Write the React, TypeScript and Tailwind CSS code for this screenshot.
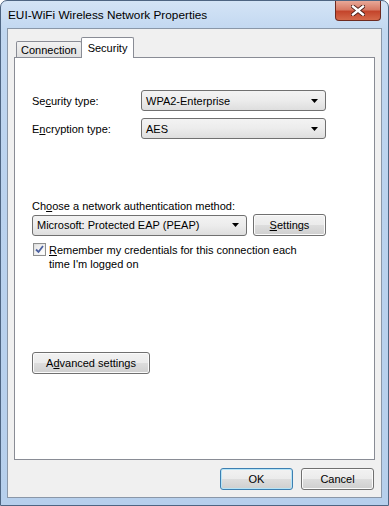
import React from 'react';

const font = { fontFamily: '"Liberation Sans", Arial, sans-serif' };

const Arrow = () => (
  <svg width="7" height="4" viewBox="0 0 7 4" className="shrink-0">
    <path d="M0 0h7L3.5 4z" fill="#000" />
  </svg>
);

const Combo = ({ value, className }: { value: string; className: string }) => (
  <div
    className={`h-[21px] flex items-center justify-between pl-[4px] pr-[7px] rounded-[3px] border border-[#707070] bg-gradient-to-b from-[#f3f3f3] via-[#ececec] to-[#dedede] text-black ${className}`}
  >
    <span>{value}</span>
    <Arrow />
  </div>
);

const Btn = ({
  children,
  className,
  primary,
}: {
  children: React.ReactNode;
  className: string;
  primary?: boolean;
}) => (
  <div
    className={`h-[22px] flex items-center justify-center rounded-[3px] border ${
      primary ? 'border-[#3c7fb1] shadow-[inset_0_0_0_1px_#b6e4f7]' : 'border-[#707070] shadow-[inset_0_0_0_1px_#fbfbfb]'
    } bg-[linear-gradient(#f2f2f2_0%,#ebebeb_50%,#dddddd_51%,#cfcfcf_100%)] text-black ${className}`}
  >
    {children}
  </div>
);

const App = () => {
  return (
    <div
      style={font}
      className="w-[389px] h-[506px] text-[11px] leading-[14px] text-black flex flex-col rounded-t-[7px] border border-[#4e6582] bg-[linear-gradient(180deg,#d4e4f6_0%,#c1d7f0_6%,#bad2ee_40%,#b6cfec_100%)] px-[6px] pb-[7px] overflow-hidden"
    >
      {/* title bar */}
      <div className="h-[27px] flex justify-between shrink-0">
        <div className="pt-[7px] pl-[1px] text-[11.8px] text-black">EUI-WiFi Wireless Network Properties</div>
        <div className="w-[46px] h-[20px] mr-[1px] rounded-b-[4px] border border-t-0 border-[#6e2a20] bg-[linear-gradient(180deg,#e8a898_0%,#d77a65_45%,#c4452c_55%,#d5694a_100%)] flex items-center justify-center">
          <svg width="14" height="11" viewBox="0 0 14 11">
            <path
              d="M2 1.5 L12 9.5 M12 1.5 L2 9.5"
              stroke="#4a1d16"
              strokeWidth="4.2"
              strokeLinecap="square"
            />
            <path
              d="M2 1.5 L12 9.5 M12 1.5 L2 9.5"
              stroke="#fff"
              strokeWidth="2.4"
              strokeLinecap="square"
            />
          </svg>
        </div>
      </div>

      {/* client area */}
      <div className="flex-1 flex flex-col bg-[#f0f0f0] border border-[#8a97a8] px-[6px] pt-[8px] pb-[6px]">
        {/* tabs */}
        <div className="flex items-end h-[20px] pl-[2px] relative z-10">
          <div className="h-[16px] px-[4px] flex items-center border border-b-0 border-[#898c95] bg-gradient-to-b from-[#f2f2f2] to-[#e0e0e0] rounded-t-[2px]">
            Connection
          </div>
          <div className="h-[21px] mb-[-1px] -ml-[1px] px-[6px] pt-[1px] flex items-start border border-b-0 border-[#898c95] bg-white rounded-t-[2px]">
            <span className="pt-[2px]">Security</span>
          </div>
        </div>

        {/* tab panel */}
        <div className="flex-1 bg-white border border-[#898c95] pl-[17px] pr-[48px] flex flex-col">
          <div className="mt-[32px] flex items-center">
            <span className="w-[109px]">
              Se<u>c</u>urity type:
            </span>
            <Combo value="WPA2-Enterprise" className="w-[185px]" />
          </div>
          <div className="mt-[7px] flex items-center">
            <span className="w-[109px]">
              E<u>n</u>cryption type:
            </span>
            <Combo value="AES" className="w-[185px]" />
          </div>

          <div className="mt-[60px]">
            Ch<u>o</u>ose a network authentication method:
          </div>
          <div className="mt-[1px] flex items-center gap-[6px]">
            <Combo value="Microsoft: Protected EAP (PEAP)" className="w-[215px]" />
            <Btn className="w-[73px]">
              <span>
                <u>S</u>ettings
              </span>
            </Btn>
          </div>
          <div className="mt-[6px] flex items-start gap-[3px] pl-[1px]">
            <div className="w-[13px] h-[13px] mt-[1px] border border-[#8e8f8f] bg-gradient-to-br from-[#dcdcdc] to-[#fbfbfb] p-[1px] shrink-0">
              <div className="w-full h-full bg-gradient-to-br from-[#e6e6e6] to-white flex items-center justify-center">
                <svg width="9" height="9" viewBox="0 0 9 9">
                  <path d="M1 4.5 L3.5 7 L8 1" fill="none" stroke="#4c61a0" strokeWidth="1.8" />
                </svg>
              </div>
            </div>
            <div className="leading-[14px] w-[250px] pt-[1px] first-letter:underline">
              Remember my credentials for this connection each time I'm logged on
            </div>
          </div>

          <div className="mt-[81px]">
            <Btn className="w-[118px]">
              <span>
                A<u>d</u>vanced settings
              </span>
            </Btn>
          </div>
        </div>

        {/* footer buttons */}
        <div className="h-[31px] flex items-end justify-end gap-[8px] pb-[1px] pr-[1px]">
          <Btn primary className="w-[73px]">
            OK
          </Btn>
          <Btn className="w-[73px]">Cancel</Btn>
        </div>
      </div>
    </div>
  );
};

export default App;
